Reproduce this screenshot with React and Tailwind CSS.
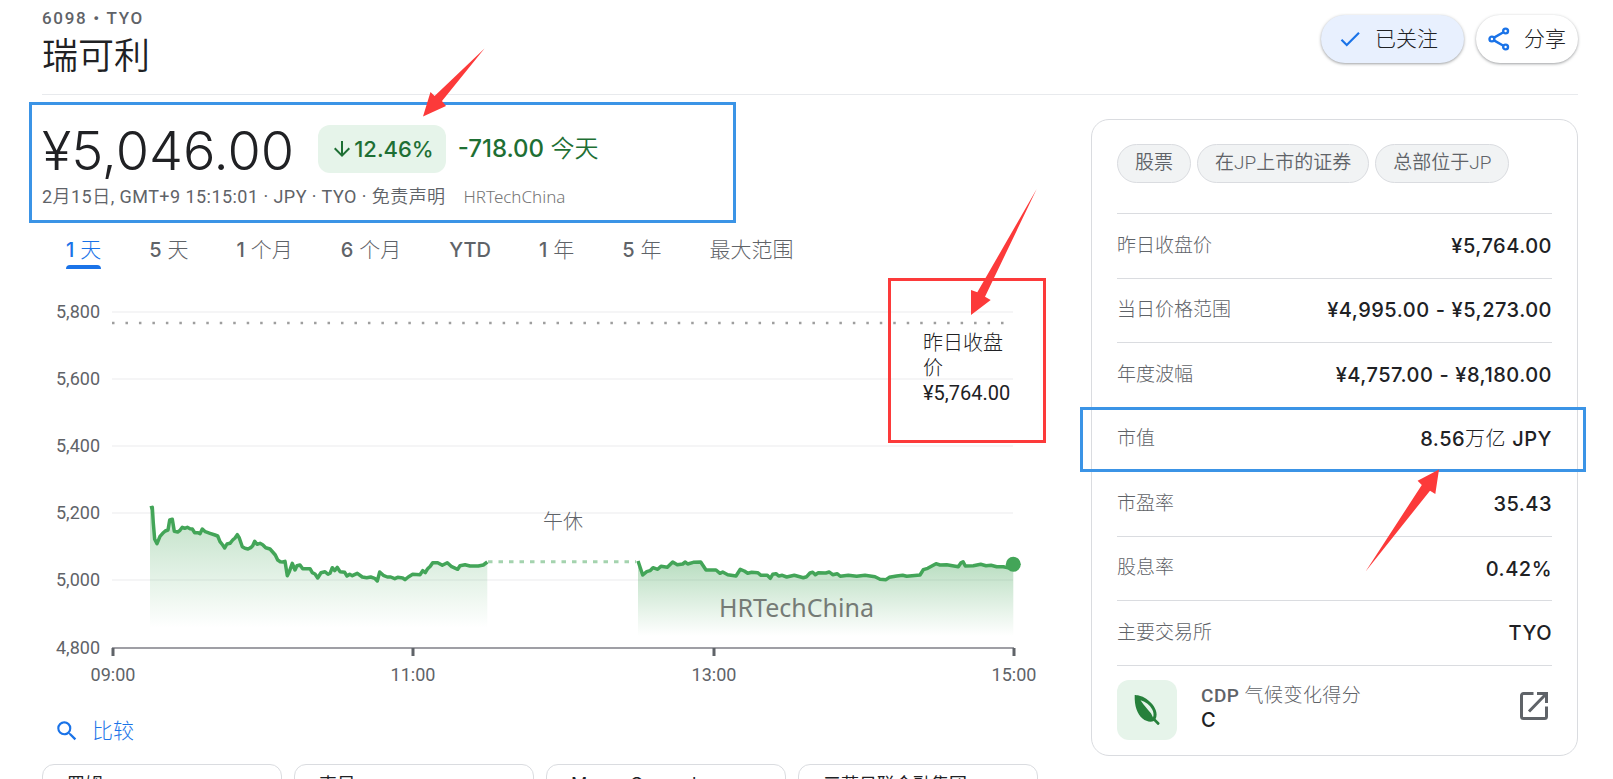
import React from 'react';
import { MdArrowDownward, MdCheck, MdSearch } from 'react-icons/md';

const RANGES = ['1 天', '5 天', '1 个月', '6 个月', 'YTD', '1 年', '5 年', '最大范围'];

const TAGS = ['股票', '在JP上市的证券', '总部位于JP'];

const STATS = [
  ['昨日收盘价', '¥5,764.00'],
  ['当日价格范围', '¥4,995.00 - ¥5,273.00'],
  ['年度波幅', '¥4,757.00 - ¥8,180.00'],
  ['市值', '8.56万亿 JPY'],
  ['市盈率', '35.43'],
  ['股息率', '0.42%'],
  ['主要交易所', 'TYO'],
];

const PEERS = ['罗姆', '索尼', 'Macro General', '三菱日联金融集团'];

const Y_TICKS = [
  ['5,800', 312],
  ['5,600', 379],
  ['5,400', 446],
  ['5,200', 513],
  ['5,000', 580],
  ['4,800', 648],
];

const X_TICKS = [
  ['09:00', 113],
  ['11:00', 413],
  ['13:00', 714],
  ['15:00', 1014],
];

const MORNING =
  '150,508 152.3,507.3 153.3,523 154.7,539.3 157,543.7 160,536.3 162.7,533.3 165.3,531 168,530 169.7,520 172.3,519.3 174.3,531.3 177.7,532 180,530.3 182.3,527.3 184.7,528.3 187.3,527.3 190,528.7 192.3,529 194.7,532.7 197.7,532.7 200,533.7 202.3,529 205.3,531.7 210,533.3 215,535 217.7,536 220,541.7 222.7,545 224.7,548 227,544 230,543.3 232.7,540 235,538 237.3,534.7 239.3,538 242.3,546.7 245,548.3 248,549 250.7,547.7 252.7,545.7 254.7,541.3 257,544.3 260,543.3 262.7,544.7 265.7,547.7 270,549 272.7,552 275.3,555 277.7,560 280.3,561.7 283,562 285,561.3 287.3,575.7 289.3,571.7 292.3,563.3 295,570 297,565.7 300,565 302.7,568.7 310,568.7 312.3,572.7 315,574 317.7,578 321,572.7 325,571.7 328,574.3 330,573.3 332.3,567.7 334.7,570.7 337.3,567.3 340,571.7 344.7,572.3 347,576 349.7,574.3 352.3,575.7 357.3,573.3 362.3,577 366.7,577.7 370.7,577 374.7,578.3 377.3,581 379.7,572 383.3,575.3 387.3,577 390.7,577 394.7,578.7 397.7,577.3 402.7,578 405,579.7 408.3,577 412.7,574.3 420,574.7 422.7,570.7 425.3,572.7 427.7,568.7 430.3,566.3 432.7,562.7 437.7,562.7 442.3,565.3 447.3,562.7 451.7,566.7 457.7,569.3 460,565.7 465,564.7 470,566 478.3,566 483.3,565 487.3,562';

const AFTERNOON =
  '638,561 642.7,575 646.7,571.7 650,570.7 653,567.7 657.7,569.3 661,566.3 667.3,567.3 672.7,562 677.3,564.7 682.7,564 685.3,562 687.7,564 693.3,562.3 700.7,562 706,570 716,570 720,573.3 722.7,572 727.7,574.7 736,576 740.3,569.3 744.3,571 747.7,573.3 751.7,572.3 757.7,572.7 761,575.3 767.3,575.3 770.3,578.3 772.7,574.3 776,573.7 778.7,576 782.3,575.3 786.7,577 794.3,575.3 803.3,577.7 806.7,576.7 810,573 812.7,572.3 815.3,574.7 818.3,572.7 825.7,573 829.3,572 832.7,574.7 837.3,573.7 840.3,576.3 848.3,575.3 856.7,576.3 865,575.3 875,576.7 880,579.3 886,579.7 889.3,577.3 896.7,576 902.7,575.3 906.7,576.3 920,575 923.3,569.7 927.7,568.3 936,563.7 940,565 946.7,564.7 958.3,566.7 961,562.7 963,561.7 965.3,566 973.3,565.7 980.7,564.3 986,565.7 991,565.3 996.7,566.7 1003.3,566.7 1008.3,567.7 1013.3,568';

/* Latin runs are medium weight, the Chinese around them stays light */
const Mixed = ({ text, latin = '' }) =>
  text.split(/([\x21-\x7e\u00a5]+)/).map((part, i) =>
    i % 2 ? <span key={i} className={`font-medium ${latin}`}>{part}</span> : part
  );

const ShareIcon = () => (
  <svg viewBox="0 0 22 24" className="h-6 w-[22px]" fill="none" stroke="#1a73e8" strokeWidth="2.400" aria-hidden="true">
    <path d="M6 10.6 15.4 5.2M6 13.4l9.4 5.4" />
    <circle cx="3.9" cy="12" r="2.400" />
    <circle cx="17.6" cy="4" r="2.400" />
    <circle cx="17.6" cy="20" r="2.400" />
  </svg>
);

const LeafIcon = () => (
  <svg viewBox="0 0 60 60" className="h-[60px] w-[60px]" aria-hidden="true">
    <path
      d="M17.7 15c1.800 0 7 .6 11.500 3.800C35.300 23 39.600 29 39.600 34.500c0 1.700-.4 3.200-1 4.600l3.800 3.700c.8.900-.9 2.800-1.900 1.900l-3.700-3.600c-3.300 1.200-7.600.6-11.300-2.500C20.300 33.800 17.300 26.500 17.700 15zm5.800 5.200c3.900 5.800 7.600 9.400 10.200 12.900 1 1.400 1.600 3.100 2.300 4.300 1-2.600.6-5.200-.9-8.100-2.200-4.200-6.200-7.600-11.600-9.100z"
      fill="#26803b"
      fillRule="evenodd"
    />
  </svg>
);

const OpenIcon = () => (
  <svg viewBox="0 0 28 28" className="h-7 w-7" fill="none" stroke="#5f6368" strokeWidth="3" aria-hidden="true">
    <path d="M13.500 1.500H3.500a2 2 0 0 0-2 2v21a2 2 0 0 0 2 2h21a2 2 0 0 0 2-2V14.500" />
    <path d="M17 1.500h9.500V11M26 2 9 19.500" />
  </svg>
);

const Arrow = ({ points, viewBox, className }) => (
  <svg viewBox={viewBox} className={`absolute z-20 ${className}`} aria-hidden="true">
    <polygon points={points} fill="#fc3a3a" />
  </svg>
);

const PriceChart = () => (
  <svg viewBox="42 269 996 430" className="block w-full overflow-visible font-['Roboto','Noto_Sans_CJK_SC',sans-serif]">
    <defs>
      <linearGradient id="amFill" gradientUnits="userSpaceOnUse" x1="0" y1="507" x2="0" y2="628">
        <stop offset="0" stopColor="#43a558" stopOpacity="0.35" />
        <stop offset="1" stopColor="#43a558" stopOpacity="0" />
      </linearGradient>
      <linearGradient id="pmFill" gradientUnits="userSpaceOnUse" x1="0" y1="561" x2="0" y2="636">
        <stop offset="0" stopColor="#43a558" stopOpacity="0.38" />
        <stop offset="1" stopColor="#43a558" stopOpacity="0" />
      </linearGradient>
    </defs>

    {Y_TICKS.map(([label, y]) => (
      <g key={label}>
        {label !== '4,800' && <rect x="112" y={y - 1} width="901" height="2" fill="#f5f5f6" />}
        <text x="100" y={y + 6} textAnchor="end" fontSize="18" fill="#5f6368">{label}</text>
      </g>
    ))}

    {/* previous close */}
    <line x1="112" x2="1008" y1="323" y2="323" stroke="#9e9e9e" strokeWidth="2.500" strokeDasharray="2.500 10.970" />

    <polygon points={`150,636 ${MORNING} 487.3,636`} fill="url(#amFill)" />
    <polygon points={`638,636 ${AFTERNOON} 1013.3,636`} fill="url(#pmFill)" />
    <g fill="none" stroke="#43a558" strokeWidth="3.500" strokeLinejoin="round">
      <polyline points={MORNING} />
      <polyline points={AFTERNOON} />
    </g>
    <line x1="488" x2="636" y1="561.7" y2="561.7" stroke="#a4d3ae" strokeWidth="3" strokeDasharray="4.500 6" />
    <circle cx="1013.3" cy="564.3" r="7.500" fill="#43a558" />

    <rect x="112" y="647" width="902" height="2" fill="#9f9fa5" />
    {X_TICKS.map(([label, x]) => (
      <g key={label}>
        <rect x={x - 1.5} y="648" width="3" height="8" fill="#5f6368" />
        <text x={x} y="681" textAnchor="middle" fontSize="18" fill="#5f6368">{label}</text>
      </g>
    ))}

    <text x="563" y="529" textAnchor="middle" fontSize="20" fontWeight="300" fill="#5f6368">午休</text>
    <text x="719" y="617" fontSize="25" fill="#757b76" className="font-['Noto_Sans',sans-serif]">HRTechChina</text>
  </svg>
);

export default function App() {
  return (
    <div className="h-screen overflow-hidden bg-white pl-[42px] pr-[35px] font-['Inter','Noto_Sans_CJK_SC',sans-serif] text-[#202124]">
      <header className="flex items-start justify-between border-b border-[#e8eaed] pb-[14px] pt-2">
        <div>
          <div className="font-['Roboto',sans-serif] text-[17px] font-medium leading-5 tracking-widest text-[#5f6368]">6098 • TYO</div>
          <h1 className="mt-1 text-4xl font-[350] leading-[48px]">瑞可利</h1>
        </div>
        <div className="mt-[7px] flex gap-3 text-[21px] font-light">
          <button className="flex h-12 items-center gap-3 rounded-full bg-[#e8f0fe] pl-4 pr-[26px] shadow-[0_1px_3px_rgba(60,64,67,0.5)]">
            <MdCheck className="size-[26px] text-[#1a73e8]" />
            已关注
          </button>
          <button className="flex h-12 items-center gap-[14px] rounded-full bg-white px-3 shadow-[0_1px_3px_rgba(60,64,67,0.5)]">
            <ShareIcon />
            分享
          </button>
        </div>
      </header>

      <main className="grid grid-cols-[minmax(0,1fr)_487px] gap-[53px]">
        <div className="min-w-0">
          <section className="relative pt-6">
            <div className="absolute -left-[13px] top-[7px] h-[121px] w-[707px] border-3 border-[#3b94e6]" />
            <Arrow
              viewBox="0 0 62 69"
              points="61.5,0.5 11.6,48 7.5,44 0,68.5 23,58 19,53"
              className="-top-[47px] left-[381px] h-[69px] w-[62px]"
            />
            <div className="flex h-16 items-center">
              <div className="text-[54px] font-[350] leading-[64px]">¥5,046.00</div>
              <div className="mb-1 ml-6 flex items-center text-[22px] font-medium text-[#1e6f34]">
                <span className="flex h-12 items-center rounded-xl bg-[#e6f4ea] px-3">
                  <MdArrowDownward className="size-6" />
                  12.46%
                </span>
                <span className="ml-3 text-2xl">
                  -718.00 <span className="font-[350]">今天</span>
                </span>
              </div>
            </div>
            <div className="flex items-center gap-[18px] font-['Roboto','Noto_Sans_CJK_SC',sans-serif] text-lg leading-7">
              <span className="tracking-wide text-[#5f6368]">
                2<span className="font-[350]">月</span>15<span className="font-[350]">日</span>, GMT+9 15:15:01 · JPY · TYO ·{' '}
                <a href="#disclaimer" className="font-[350]">免责声明</a>
              </span>
              <span className="font-['Noto_Sans',sans-serif] text-[17px] font-light text-[#757575]">HRTechChina</span>
            </div>
          </section>

          <nav className="mt-5 flex text-[21px] font-light text-[#5f6368]">
            {RANGES.map((range, i) => (
              <button key={range} className={`px-6 ${i === 0 ? 'text-[#1a73e8]' : ''}`}>
                <span className="relative block h-[38px] leading-[38px]">
                  <Mixed text={range} latin="text-xl" />
                  {i === 0 && <span className="absolute inset-x-0 bottom-0 h-1 rounded-t bg-[#1a73e8]" />}
                </span>
              </button>
            ))}
          </nav>

          <div className="relative">
            <PriceChart />
            <div className="absolute -right-2 top-[9px] h-[165px] w-[158px] border-3 border-[#fc3a3a] pl-8 pr-7 pt-[50px] font-['Roboto','Noto_Sans_CJK_SC',sans-serif] text-xl leading-[25px]">
              <div className="font-light">昨日收盘价</div>
              <div>¥5,764.00</div>
            </div>
            <Arrow
              viewBox="0 0 67 128"
              points="66.7,1 7.3,104.3 1,102 1,127 20.7,112 15,108.7"
              className="-top-[81px] right-px h-32 w-[67px]"
            />
          </div>

          <button className="ml-3 mt-3 flex h-10 items-center gap-3 text-[21px] font-light text-[#1a73e8]">
            <MdSearch className="size-[26px]" />
            比较
          </button>

          <div className="mt-[13px] grid grid-cols-4 gap-3">
            {PEERS.map(name => (
              <a key={name} href="#peer" className="h-24 rounded-xl border border-[#dadce0] px-6 pt-[6px] text-lg leading-7">
                {name}
              </a>
            ))}
          </div>
        </div>

        <aside className="pt-6">
          <div className="relative rounded-[18px] border border-[#dadce0] px-[25px] pb-[15px] pt-6">
            <div className="flex gap-[6px] font-['Roboto','Noto_Sans_CJK_SC',sans-serif] text-[19px] font-[350] text-[#5f6368]">
              {TAGS.map(tag => (
                <a key={tag} href="#tag" className="flex h-[39px] items-center rounded-full border border-[#dadce0] bg-[#f1f3f4] px-[17px]">
                  {tag}
                </a>
              ))}
            </div>

            <table className="mt-[30px] h-[453px] w-full border-collapse">
              <tbody>
                {STATS.map(([label, value]) => (
                  <tr key={label} className="border-y border-[#dadce0]">
                    <th className="text-left text-[19px] font-light text-[#5f6368]">{label}</th>
                    <td className="text-right text-xl font-light tracking-wide">
                      <Mixed text={value} />
                    </td>
                  </tr>
                ))}
              </tbody>
            </table>

            <div className="mt-[14px] flex items-center">
              <span className="rounded-xl bg-[#e6f4ea]">
                <LeafIcon />
              </span>
              <div className="mb-1 ml-6">
                <div className="font-['Roboto','Noto_Sans_CJK_SC',sans-serif] text-[19px] font-light leading-6 tracking-wide text-[#5f6368]">
                  <Mixed text="CDP 气候变化得分" />
                </div>
                <div className="text-xl font-medium leading-6">C</div>
              </div>
              <a href="#cdp" aria-label="CDP" className="mb-2 ml-auto mr-1">
                <OpenIcon />
              </a>
            </div>

            {/* market cap highlight */}
            <div className="absolute -left-3 -right-[9px] top-[287px] h-[65px] border-3 border-[#3b94e6]" />
            <Arrow
              viewBox="0 0 74 104"
              points="0.4,102.7 56.8,16 52.6,11.7 74,0.5 70.3,25 65,21.7"
              className="right-[138px] top-[349px] h-[104px] w-[74px]"
            />
          </div>
        </aside>
      </main>
    </div>
  );
}
